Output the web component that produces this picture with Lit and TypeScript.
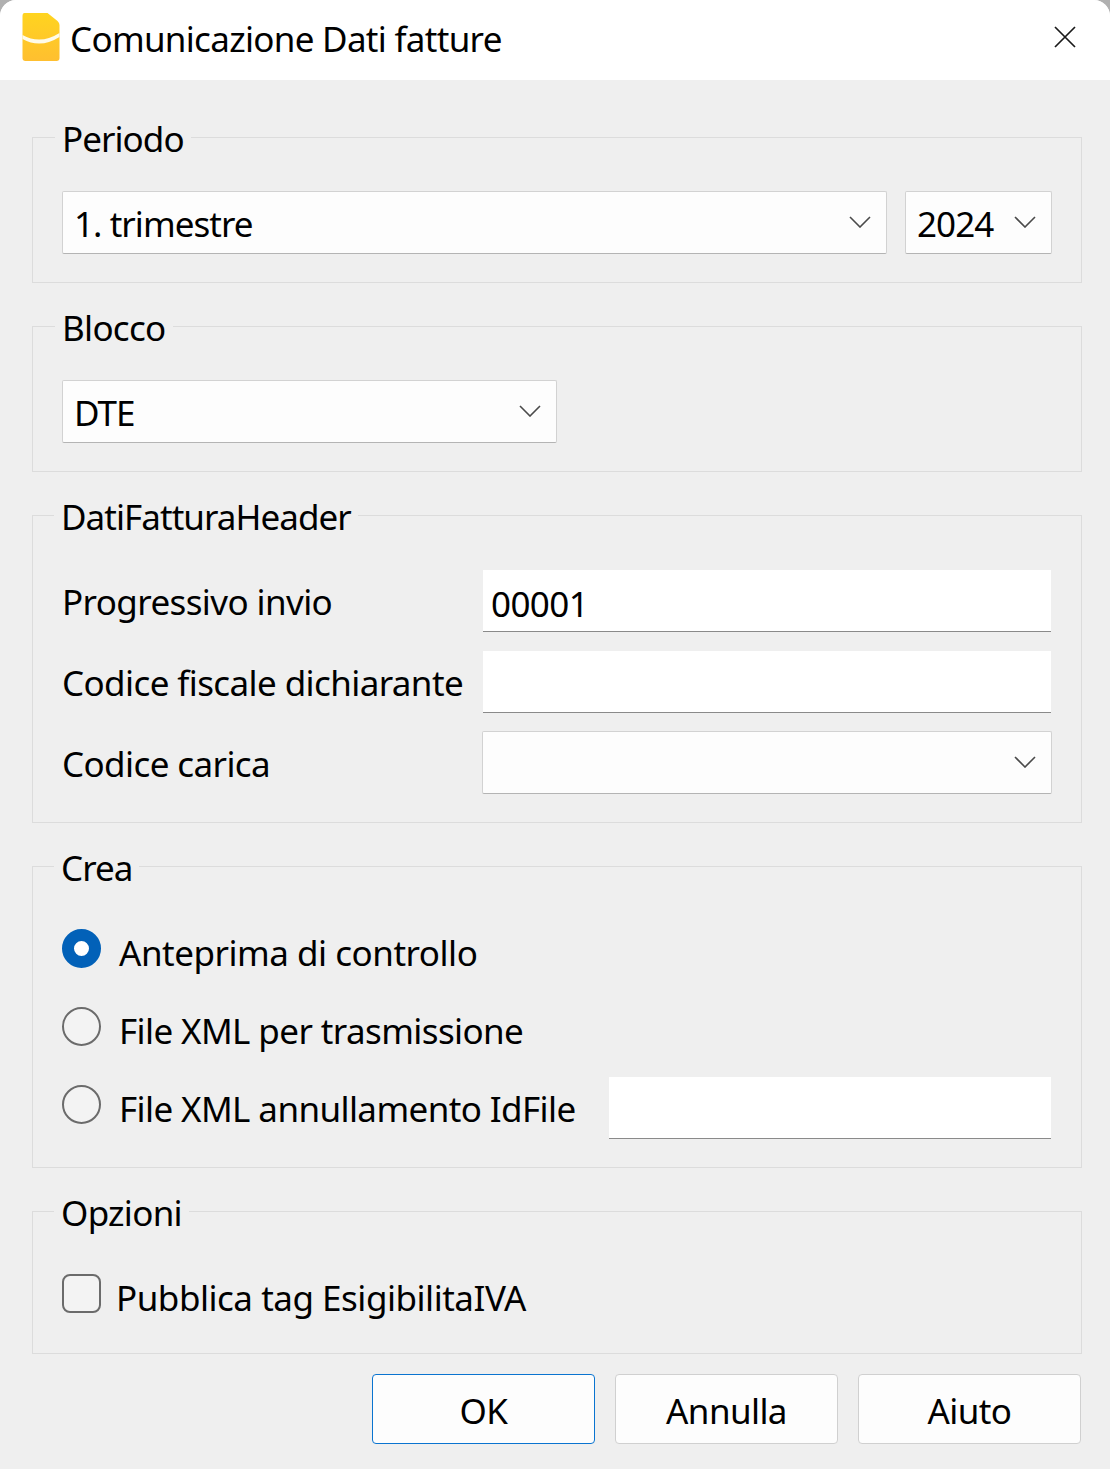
import { LitElement, html, css, svg } from 'lit';
import { customElement } from 'lit/decorators.js';

const chevron = html`<svg class="chev" width="22" height="12" viewBox="0 0 22 12">
  <path d="M1 1 L11 11 L21 1" fill="none" stroke="#4a4a4a" stroke-width="1.6" />
</svg>`;

const appIcon = svg`
  <defs>
    <linearGradient id="g" x1="0" y1="0" x2="0" y2="1">
      <stop offset="0" stop-color="#ffd41f" />
      <stop offset="1" stop-color="#ffbf30" />
    </linearGradient>
  </defs>
  <path d="M2 0 H25 L35 8 Q37 10 37 12 V45 Q37 48 34 48 H3 Q0 48 0 45 V3 Q0 0 2 0 Z" fill="url(#g)" />
  <path d="M0 22 Q18 32 37 20 V24 Q18 36 0 26 Z" fill="#fffbea" />
`;

@customElement('app-root')
export class AppRoot extends LitElement {
  static styles = css`
    :host {
      display: block;
      width: 1110px;
      height: 1469px;
      overflow: hidden;
      background: #b0b0b0;
      font-family: 'Noto Sans', 'Open Sans', sans-serif;
      font-size: 35px;
      color: #000;
    }
    .window {
      height: 1469px;
      background: #efefef;
      border-radius: 16px 16px 0 0;
      overflow: hidden;
      display: flex;
      flex-direction: column;
    }
    .title {
      height: 80px;
      flex: none;
      background: #fff;
      display: flex;
      align-items: center;
      padding: 0 34px 0 22px;
    }
    .title .icon {
      margin: -6px 10px 0 0;
    }
    .title .text {
      flex: 1;
      letter-spacing: -0.7px;
      line-height: 46px;
      margin-top: -2px;
    }
    .close {
      margin-top: -6px;
    }
    .body {
      flex: 1;
      display: flex;
      flex-direction: column;
      gap: 20px;
      padding: 34px 28px 25px 32px;
    }
    fieldset {
      margin: 0;
      min-width: 0;
      border: 1px solid #dcdcdc;
      padding: 31px 29px 28px;
    }
    legend {
      margin-left: -7px;
      padding: 4px 7px 0;
      line-height: 42px;
      letter-spacing: -0.7px;
    }
    legend.left {
      margin-left: -8px;
    }
    legend.tight {
      letter-spacing: -0.95px;
    }
    .row {
      display: flex;
      gap: 18px;
    }
    .select {
      box-sizing: border-box;
      height: 63px;
      background: #fdfdfd;
      border: 1px solid #d2d2d2;
      border-bottom-color: #b4b4b4;
      border-radius: 2px;
      display: flex;
      align-items: center;
      padding: 2px 15px 0 11px;
      letter-spacing: -0.95px;
    }
    .chev {
      margin: -4px 0 0 auto;
    }
    .wide {
      flex: 1;
    }
    .year {
      width: 147px;
    }
    .blocco {
      width: 495px;
    }
    .field {
      box-sizing: border-box;
      height: 62px;
      background: #fff;
      border-bottom: 1px solid #8a8a8a;
      margin: 0 1px;
      padding: 6px 8px 0;
      display: flex;
      align-items: center;
      letter-spacing: -0.6px;
    }
    .form {
      display: grid;
      grid-template-columns: 420px 1fr;
      row-gap: 19px;
      align-items: center;
      padding-top: 1px;
    }
    .form .select {
      margin-top: -1px;
    }
    .form .label {
      letter-spacing: -0.6px;
    }
    .radios {
      display: flex;
      flex-direction: column;
      gap: 16px;
      padding-top: 1px;
    }
    .choice {
      display: flex;
      align-items: center;
      min-height: 62px;
      letter-spacing: -0.6px;
    }
    .choice.wider {
      letter-spacing: -0.48px;
    }
    .radio {
      box-sizing: border-box;
      width: 39px;
      height: 39px;
      flex: none;
      margin: 0 18px 8px 0;
      border-radius: 50%;
      border: 2px solid #6b6b6b;
      background: #f3f3f3;
    }
    .radio.on {
      border: 12px solid #0261b8;
      background: #fff;
    }
    .check {
      box-sizing: border-box;
      width: 39px;
      height: 39px;
      flex: none;
      margin: 0 15px 8px 0;
      border-radius: 8px;
      border: 2px solid #6b6b6b;
      background: #f3f3f3;
    }
    .choice .field {
      flex: 1;
      margin: 0 1px 0 33px;
    }
    .opzioni {
      padding-top: 32px;
      padding-bottom: 25px;
    }
    .buttons {
      display: flex;
      justify-content: flex-end;
      gap: 20px;
      padding-right: 1px;
    }
    button {
      box-sizing: border-box;
      width: 223px;
      height: 70px;
      background: #fdfdfd;
      border: 1px solid #d0d0d0;
      border-radius: 4px;
      font: inherit;
      letter-spacing: -0.6px;
      color: #000;
      padding: 2px 0 0;
    }
    button.primary {
      border-color: #0a74d0;
    }
  `;

  render() {
    return html`
      <div class="window">
        <div class="title">
          <svg class="icon" width="38" height="48" viewBox="0 0 37 48">${appIcon}</svg>
          <span class="text">Comunicazione Dati fatture</span>
          <svg class="close" width="22" height="22" viewBox="0 0 22 22">
            <path d="M1 1 L21 21 M21 1 L1 21" stroke="#1a1a1a" stroke-width="1.7" fill="none" />
          </svg>
        </div>
        <div class="body">
          <fieldset>
            <legend class="tight">Periodo</legend>
            <div class="row">
              <div class="select wide"><span>1. trimestre</span>${chevron}</div>
              <div class="select year"><span>2024</span>${chevron}</div>
            </div>
          </fieldset>
          <fieldset>
            <legend>Blocco</legend>
            <div class="select blocco"><span>DTE</span>${chevron}</div>
          </fieldset>
          <fieldset>
            <legend class="left tight">DatiFatturaHeader</legend>
            <div class="form">
              <span class="label">Progressivo invio</span>
              <div class="field">00001</div>
              <span class="label">Codice fiscale dichiarante</span>
              <div class="field"></div>
              <span class="label">Codice carica</span>
              <div class="select">${chevron}</div>
            </div>
          </fieldset>
          <fieldset>
            <legend class="left tight">Crea</legend>
            <div class="radios">
              <div class="choice wider"><span class="radio on"></span>Anteprima di controllo</div>
              <div class="choice"><span class="radio"></span>File XML per trasmissione</div>
              <div class="choice">
                <span class="radio"></span>File XML annullamento IdFile
                <div class="field"></div>
              </div>
            </div>
          </fieldset>
          <fieldset class="opzioni">
            <legend class="left">Opzioni</legend>
            <div class="choice wider"><span class="check"></span>Pubblica tag EsigibilitaIVA</div>
          </fieldset>
          <div class="buttons">
            <button class="primary">OK</button>
            <button>Annulla</button>
            <button>Aiuto</button>
          </div>
        </div>
      </div>
    `;
  }
}
